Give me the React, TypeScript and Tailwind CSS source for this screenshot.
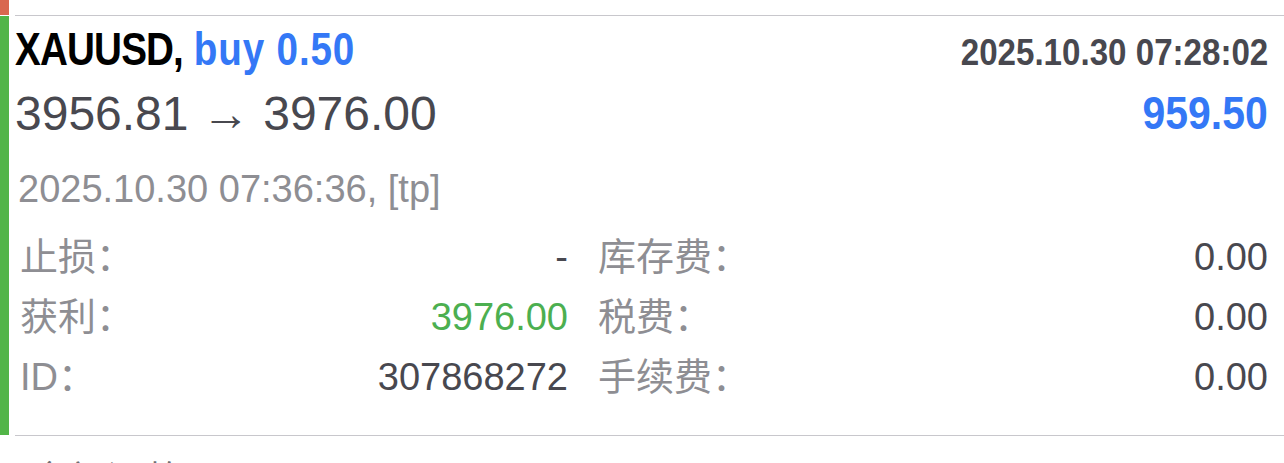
import React from 'react';

const fontStack = "font-['Liberation_Sans','Noto_Sans_CJK_SC',sans-serif]";

type Cell = { label: string; value: string; valueClass?: string };

const rows: [Cell, Cell][] = [
  [
    { label: '止损：', value: '-' },
    { label: '库存费：', value: '0.00' },
  ],
  [
    { label: '获利：', value: '3976.00', valueClass: 'text-[#4caf50]' },
    { label: '税费：', value: '0.00' },
  ],
  [
    { label: 'ID：', value: '307868272' },
    { label: '手续费：', value: '0.00' },
  ],
];

const App: React.FC = () => {
  return (
    <div className={`w-[1284px] h-[463px] overflow-hidden bg-white ${fontStack}`}>
      {/* Previous item stub */}
      <div className="flex h-[15px]">
        <div className="w-[9px] bg-[#d9674f]" />
      </div>

      {/* Closed deal item */}
      <div className="flex h-[421px]">
        <div className="w-[9px] my-px bg-[#52b548]" />
        <div className="flex-1 ml-[6px] border-y border-[#c8c7cc] pr-[16px] flex flex-col">
          {/* Symbol + open time */}
          <div className="mt-[10px] flex justify-between items-start h-[46px]">
            <div className="origin-left scale-x-[0.84] whitespace-nowrap text-[46px] leading-[46px] font-bold">
              <span className="text-black tracking-[-1px]">XAUUSD,</span>{' '}
              <span className="text-[#3478f6] tracking-[1px]">buy 0.50</span>
            </div>
            <div className="mt-[9px] origin-right scale-x-[0.92] whitespace-nowrap text-[36px] leading-[36px] font-bold text-[#48484f]">
              2025.10.30 07:28:02
            </div>
          </div>

          {/* Prices + profit */}
          <div className="mt-[18px] flex justify-between h-[47px]">
            <div className="whitespace-nowrap text-[48px] leading-[47px] text-[#48484f]">
              3956.81 → 3976.00
            </div>
            <div className="origin-right scale-x-[0.89] whitespace-nowrap text-[46px] leading-[47px] font-bold text-[#3478f6]">
              959.50
            </div>
          </div>

          {/* Close time */}
          <div className="mt-[33px] pl-[3px] whitespace-nowrap text-[38px] leading-[38px] text-[#8e8e93]">
            2025.10.30 07:36:36, [tp]
          </div>

          {/* Details */}
          <div className="mt-[19px] pl-[5px] grid grid-cols-[548px_1fr] gap-x-[30px] text-[38px] leading-[60px]">
            {rows.map(([left, right]) => (
              <React.Fragment key={left.label}>
                <div className="flex justify-between whitespace-nowrap">
                  <span className="text-[#8e8e93]">{left.label}</span>
                  <span className={left.valueClass ?? 'text-[#48484f]'}>{left.value}</span>
                </div>
                <div className="flex justify-between whitespace-nowrap">
                  <span className="text-[#8e8e93]">{right.label}</span>
                  <span className={right.valueClass ?? 'text-[#48484f]'}>{right.value}</span>
                </div>
              </React.Fragment>
            ))}
          </div>
        </div>
      </div>

      {/* Next item, cut off at the bottom edge */}
      <div className="flex">
        <div className="w-[9px]" />
        <div className="ml-[6px] pl-[15px] pt-[25px] text-[38px] leading-[38px] text-[#6e6e73] whitespace-nowrap">
          余额调整
        </div>
      </div>
    </div>
  );
};

export default App;
